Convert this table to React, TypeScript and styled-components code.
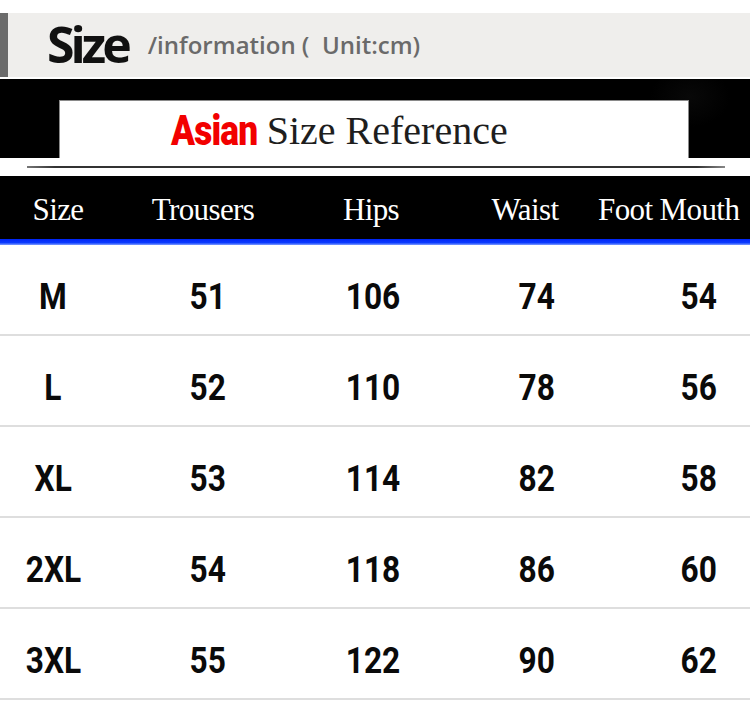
import React from "react"
import styled, { createGlobalStyle } from "styled-components"

const GlobalStyle = createGlobalStyle`
  body {
    margin: 0;
    background: #fff;
  }
`

const Page = styled.div`
  width: 750px;
  height: 707px;
  padding-top: 13px;
  box-sizing: border-box;
  background: #fff;
  overflow: hidden;
`

const InfoBar = styled.div`
  height: 64px;
  background: #efeeec;
  border-left: 8px solid #6b6b6b;
  display: flex;
  align-items: center;
  gap: 20px;
  padding-left: 39px;
  margin-bottom: 2px;
`

const InfoTitle = styled.span`
  font-family: "Open Sans", sans-serif;
  font-weight: 700;
  font-size: 50px;
  line-height: 50px;
  letter-spacing: -4px;
  color: #111;
  padding-bottom: 2px;
`

const InfoSub = styled.span`
  font-family: "Open Sans", sans-serif;
  font-weight: 600;
  font-size: 24px;
  line-height: 30px;
  color: #6a6a6a;
  white-space: pre;
`

const Banner = styled.div`
  height: 79px;
  box-sizing: border-box;
  padding: 21px 61px 0 59px;
  display: flex;
  background: radial-gradient(ellipse 40px 30px at 690px 18px, #080808, #000 100%);
`

const BannerBox = styled.div`
  flex: 1;
  background: #fff;
  border: 1px solid #8a8a8a;
  border-bottom: none;
  display: flex;
  align-items: center;
  padding-left: 111px;
  padding-top: 2px;
`

const Asian = styled.span`
  display: inline-block;
  font-family: Roboto, "Liberation Sans", sans-serif;
  font-weight: 900;
  font-size: 42px;
  line-height: 42px;
  color: #f20000;
  letter-spacing: -1px;
  transform: scaleX(0.84);
  transform-origin: left center;
  margin-right: -8px;
`

const BannerTitle = styled.span`
  font-family: "Liberation Serif", serif;
  font-size: 40px;
  line-height: 42px;
  color: #1e1e1e;
  margin-left: 1px;
`

const DividerStrip = styled.div`
  height: 18px;
  box-sizing: border-box;
  padding: 8px 25px 8px 27px;
`

const DividerLine = styled.div`
  height: 2px;
  background: linear-gradient(90deg, #777, #333 4%, #333 96%, #888);
`

const HeadRow = styled.div`
  height: 63px;
  background: #000;
  display: grid;
  grid-template-columns: 116px 174px 162px 146px 1fr;
  align-items: center;
`

const HeadCell = styled.div`
  font-family: "Liberation Serif", serif;
  font-size: 31px;
  letter-spacing: -0.6px;
  color: #fff;
  text-align: center;
  white-space: nowrap;
  padding-top: 4px;

  &:last-child {
    text-align: left;
  }
`

const BlueRule = styled.div`
  height: 6px;
  background: linear-gradient(180deg, #0024f5 0%, #0a3aff 60%, #7d9cff 100%);
`

const Row = styled.div`
  height: 75px;
  padding-top: 14px;
  border-bottom: 2px solid #dedede;
  display: grid;
  grid-template-columns: 106px 204px 126px 202px 1fr;
  align-items: center;
`

const Cell = styled.div`
  text-align: center;

  &:last-child {
    padding-left: 10px;
  }
`

const Value = styled.span`
  display: inline-block;
  font-family: Roboto, "Liberation Sans", sans-serif;
  font-weight: 700;
  font-size: 36px;
  line-height: 40px;
  color: #0a0a0a;
  transform: scaleX(0.88);
`

const headers = ["Size", "Trousers", "Hips", "Waist", "Foot Mouth"]

const rows = [
  ["M", "51", "106", "74", "54"],
  ["L", "52", "110", "78", "56"],
  ["XL", "53", "114", "82", "58"],
  ["2XL", "54", "118", "86", "60"],
  ["3XL", "55", "122", "90", "62"],
]

const App: React.FC = () => {
  return (
    <>
      <GlobalStyle />
      <Page>
        <InfoBar>
          <InfoTitle>Size</InfoTitle>
          <InfoSub>/information (  Unit:cm)</InfoSub>
        </InfoBar>

        <Banner>
          <BannerBox>
            <Asian>Asian</Asian>
            <BannerTitle>Size Reference</BannerTitle>
          </BannerBox>
        </Banner>

        <DividerStrip>
          <DividerLine />
        </DividerStrip>

        <HeadRow>
          {headers.map((h) => (
            <HeadCell key={h}>{h}</HeadCell>
          ))}
        </HeadRow>
        <BlueRule />

        {rows.map((r) => (
          <Row key={r[0]}>
            {r.map((v, i) => (
              <Cell key={i}>
                <Value>{v}</Value>
              </Cell>
            ))}
          </Row>
        ))}
      </Page>
    </>
  )
}

export default App
